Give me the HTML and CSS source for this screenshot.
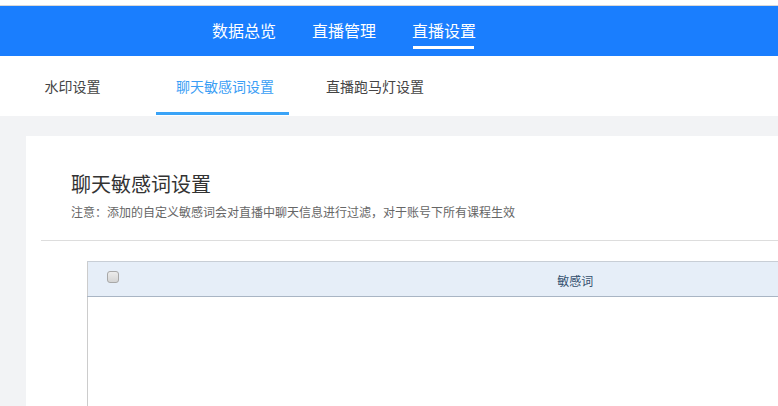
FILE: index.html
```html
<!DOCTYPE html>
<html lang="zh-CN">
<head>
<meta charset="utf-8">
<title>聊天敏感词设置</title>
<link rel="stylesheet" href="styles.css">
</head>
<body>
<div class="page">
  <div class="topline"></div>
  <header class="header">
    <nav class="nav">
      <a class="nav-item">数据总览</a>
      <a class="nav-item">直播管理</a>
      <a class="nav-item active">直播设置</a>
    </nav>
  </header>
  <div class="subtabs">
    <a class="subtab">水印设置</a>
    <a class="subtab active">聊天敏感词设置</a>
    <a class="subtab">直播跑马灯设置</a>
  </div>
  <main class="main">
    <section class="card">
      <div class="card-head">
        <h1 class="title">聊天敏感词设置</h1>
        <p class="note">注意：添加的自定义敏感词会对直播中聊天信息进行过滤，对于账号下所有课程生效</p>
      </div>
      <div class="divider"></div>
      <div class="table-wrap">
        <table class="table">
          <thead>
            <tr>
              <th class="col-check"><span class="checkbox"></span></th>
              <th class="col-word">敏感词</th>
            </tr>
          </thead>
          <tbody>
            <tr><td class="empty" colspan="2"></td></tr>
          </tbody>
        </table>
      </div>
    </section>
  </main>
</div>
</body>
</html>
```

FILE: styles.css
```css
* { box-sizing: border-box; }
html, body {
  margin: 0;
  padding: 0;
  width: 778px;
  height: 406px;
  overflow: hidden;
  background: #f2f3f5;
  font-family: "Noto Sans CJK SC", "Noto Sans", "Liberation Sans", sans-serif;
}
.page { width: 778px; height: 406px; overflow: hidden; }
.topline {
  height: 6px;
  background: #ffffff;
  border-bottom: 1px solid #d8d8d8;
}
.header {
  height: 50px;
  background: #1a7efe;
}
.nav {
  display: flex;
  height: 50px;
  padding-left: 212px;
  gap: 36px;
}
.nav-item {
  position: relative;
  display: flex;
  align-items: center;
  height: 48px;
  color: #ffffff;
  font-size: 16px;
  line-height: 16px;
  white-space: nowrap;
}
.nav-item.active::after {
  content: "";
  position: absolute;
  left: 1px;
  right: 2px;
  top: 40px;
  height: 3px;
  background: #ffffff;
}
.subtabs {
  display: flex;
  height: 60px;
  background: #ffffff;
}
.subtab {
  position: relative;
  width: 150px;
  display: flex;
  justify-content: center;
  align-items: center;
  padding-bottom: 1px;
  font-size: 14px;
  color: #444444;
  white-space: nowrap;
}
.subtab:first-child { padding-right: 5px; }
.subtab.active { color: #3a9ef5; }
.subtab.active::after {
  content: "";
  position: absolute;
  left: 6px;
  width: 133px;
  bottom: 1px;
  height: 3px;
  background: #3aa3f7;
}
.main {
  height: 290px;
  padding: 20px 0 0 26px;
  background: #f2f3f5;
  overflow: hidden;
}
.card {
  width: 1100px;
  height: 270px;
  background: #ffffff;
  overflow: hidden;
}
.card-head { padding: 38px 0 0 45px; }
.title {
  margin: 0;
  font-size: 20px;
  line-height: 20px;
  font-weight: normal;
  color: #333333;
}
.note {
  margin: 12px 0 0;
  font-size: 12px;
  line-height: 12px;
  color: #666666;
}
.divider {
  margin: 22px 0 0 15px;
  height: 1px;
  background: #dddddd;
}
.table-wrap { padding: 20px 0 0 61px; }
.table {
  width: 936px;
  border-collapse: collapse;
  border-left: 1px solid #cccccc;
}
.table th {
  height: 35px;
  background: #e6eef8;
  border-top: 1px solid #c8ced6;
  border-bottom: 1px solid #a9b5c4;
  font-weight: normal;
  font-size: 12px;
  color: #34506e;
  padding: 0;
}
.col-check {
  width: 40px;
  text-align: left;
  vertical-align: top;
}
.checkbox {
  display: block;
  width: 12px;
  height: 12px;
  margin: 9px 0 0 19px;
  border: 1px solid #a8a8a8;
  border-radius: 3px;
  background: linear-gradient(#ececec, #d4d4d4);
}
.col-word { text-align: center; padding-top: 2px !important; }
.empty { height: 109px; }
```
